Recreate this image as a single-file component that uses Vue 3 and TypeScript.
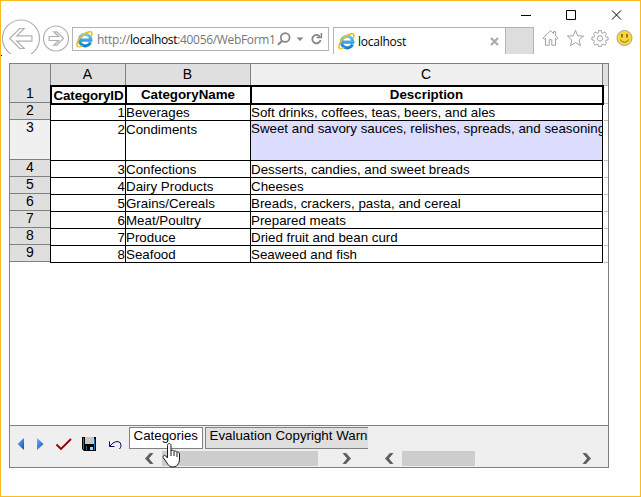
<script setup lang="ts">
interface Row {
  id: number
  name: string
  description: string
  tall?: boolean
}

const rows: Row[] = [
  { id: 1, name: 'Beverages', description: 'Soft drinks, coffees, teas, beers, and ales' },
  { id: 2, name: 'Condiments', description: 'Sweet and savory sauces, relishes, spreads, and seasonings', tall: true },
  { id: 3, name: 'Confections', description: 'Desserts, candies, and sweet breads' },
  { id: 4, name: 'Dairy Products', description: 'Cheeses' },
  { id: 5, name: 'Grains/Cereals', description: 'Breads, crackers, pasta, and cereal' },
  { id: 6, name: 'Meat/Poultry', description: 'Prepared meats' },
  { id: 7, name: 'Produce', description: 'Dried fruit and bean curd' },
  { id: 8, name: 'Seafood', description: 'Seaweed and fish' },
]
</script>

<template>
  <div class="window">
    <svg width="0" height="0" class="defs">
      <defs>
        <linearGradient id="ie" x1="0" y1="0" x2="0" y2="1">
          <stop offset="0" stop-color="#6cc8f2" />
          <stop offset="1" stop-color="#1680c8" />
        </linearGradient>
        <linearGradient id="nav" x1="0" y1="0" x2="1" y2="1">
          <stop offset="0" stop-color="#6fb4f4" />
          <stop offset="1" stop-color="#0c4cc0" />
        </linearGradient>
        <symbol id="ie-logo" viewBox="0 0 16 16">
          <path d="M13.6 10.6A5.4 5.4 0 1 1 14 8.6H4.2" fill="none" stroke="url(#ie)" stroke-width="2.9" />
          <path d="M2.2 14.8C-.8 13.8 1.6 7.6 6.6 3.6 10.6.4 14.8-.2 15 2.2c.1.9-.2 1.7-.6 2.5" fill="none" stroke="#f4bd20" stroke-width="1.5" />
          <path d="M2.2 14.8c1 .2 2.4-.3 3.8-1.2" fill="none" stroke="#f4bd20" stroke-width="1.2" />
        </symbol>
      </defs>
    </svg>

    <div class="captions">
      <svg width="100" height="12" viewBox="0 0 100 12" fill="none" stroke="#000">
        <path d="M0 5.5H10M45.5 .5h9v9h-9zM91 .5l9 9M100 .5l-9 9" />
      </svg>
    </div>

    <header class="toolbar">
      <svg class="nav-buttons" width="70" height="35" viewBox="0 0 70 35" fill="none" stroke="#b0b0b0" stroke-width="1.2">
        <circle cx="20" cy="19.5" r="18.5" />
        <path d="M8.7 19.500l10-10h4.500l-7.300 7.300h15v5.400h-15l7.300 7.300h-4.500z" />
        <circle cx="55" cy="19.500" r="12.500" />
        <path d="M62.500 19.500l-6.700-6.700h-3l4.800 4.700h-9.500v4h9.500l-4.800 4.700h3z" />
      </svg>
      <div class="address">
        <svg width="17" height="17"><use href="#ie-logo" /></svg>
        <span class="url">http://<b>localhost</b>:40056/WebForm1</span>
        <svg class="tools" width="46" height="16" viewBox="0 0 46 16" fill="none" stroke="#858585">
          <circle cx="8.200" cy="6.500" r="4.400" stroke-width="1.700" />
          <path d="M5.200 9.700L1 13.700" stroke-width="2.200" />
          <path d="M19.500 6.500h7L23 10z" fill="#858585" stroke="none" />
          <path d="M43 5.800A4.200 4.200 0 1 0 43.600 9" stroke-width="1.800" />
          <path d="M39.500 6.500h4.900V2" stroke-width="1.500" />
        </svg>
      </div>
      <div class="tab">
        <svg width="17" height="17"><use href="#ie-logo" /></svg>
        <span class="tab-title">localhost</span>
        <svg class="close" width="9" height="9" viewBox="0 0 9 9" stroke="#aaa" stroke-width="2.200"><path d="M1 1l7 7M8 1L1 8" /></svg>
      </div>
      <div class="new-tab"></div>
      <svg class="actions" width="92" height="18" viewBox="0 0 92 18" fill="none" stroke="#a0a0a0">
        <path d="M1 9.200L8.500 1.600l3 3V2.600h2v4L16 9.200l-1.200 1.200-1.300-1.200v7h-3.700v-5.500H7.200v5.500H3.500v-7l-1.300 1.200z" />
        <path d="M33.500 1.300l2.200 5.500 5.900.3-4.500 3.900 1.400 5.700-5-3.200-5 3.200 1.400-5.700-4.500-3.900 5.900-.3z" />
        <path d="M56.800 1.500h2.400l.5 2.200 1.300.5 1.900-1.200 1.700 1.700-1.200 1.900.5 1.300 2.200.5v2.400l-2.200.5-.5 1.300 1.200 1.900-1.700 1.700-1.900-1.200-1.300.5-.5 2.200h-2.400l-.5-2.200-1.300-.5-1.900 1.200-1.700-1.700 1.200-1.900-.5-1.300-2.200-.5V8.400l2.200-.5.5-1.300-1.200-1.900 1.700-1.700 1.900 1.200 1.300-.5z" />
        <circle cx="58" cy="9.500" r="2.700" />
        <circle cx="82.500" cy="9" r="7.500" fill="#fbd63e" stroke="#a9a48c" />
        <path d="M80 5v3.500M85 5v3.500" stroke="#665821" stroke-width="1.500" />
        <path d="M78 10.500q4.500 5.500 9 0" stroke="#81702b" />
      </svg>
    </header>

    <main class="sheet">
      <div class="columns">
        <div></div><div>A</div><div>B</div><div class="current">C</div><div></div>
      </div>
      <div class="body">
        <div class="row-heads">
          <div class="row-head first">1</div>
          <div v-for="row in rows" :key="row.id" class="row-head" :class="{ tall: row.tall }">{{ row.id + 1 }}</div>
        </div>
        <div class="cells">
          <div class="titles"><div class="title">CategoryID</div><div>CategoryName</div><div>Description</div></div>
          <div v-for="row in rows" :key="row.id" class="row" :class="{ tall: row.tall }">
            <div class="number">{{ row.id }}</div>
            <div>{{ row.name }}</div>
            <div class="description">{{ row.description }}</div>
          </div>
        </div>
        <div class="rest">
          <i class="first"></i>
          <i v-for="row in rows" :key="row.id" :class="{ tall: row.tall }"></i>
        </div>
      </div>
      <footer class="footer">
        <svg class="commands" width="119" height="41" viewBox="0 0 119 41">
          <path d="M14 12v12l-6.500-6z" fill="url(#nav)" />
          <path d="M27 12v12l6.500-6z" fill="url(#nav)" />
          <path d="M46.500 18.500l4.500 4.500 10-10" fill="none" stroke="#8b0000" stroke-width="1.800" />
          <path d="M72 11h14v14H74l-2-2z" fill="#000" />
          <path d="M75 11h9v7h-9z" fill="#c8c8c8" />
          <path d="M73 12h1v11h-1zM85 13h-1v11h1zM76 20h1v4h-1z" fill="#1576b4" />
          <path d="M80 21h3v3h-3z" fill="#c8c8c8" />
          <path d="M99.500 15.500v5h5M100 20l3-3q2-1.500 5-1.500 3 .5 3 4 0 2-1.500 3.500" fill="none" stroke="#000084" />
        </svg>
        <div class="sheets">
          <div class="sheet-tabs">
            <div class="sheet-tab active">Categories</div>
            <div class="sheet-tab">Evaluation Copyright Warning</div>
          </div>
          <div class="scrollbar">
            <svg width="9" height="11" viewBox="0 0 9 11"><path d="M8.500 0H5L0 5.500 5 11h3.500L4 5.500z" fill="#606060" /></svg>
            <div class="thumb wide"></div>
            <svg width="9" height="11" viewBox="0 0 9 11"><path d="M.5 0H4l5 5.500L4 11H.5L5 5.500z" fill="#606060" /></svg>
          </div>
        </div>
        <div class="scrollbar second">
          <svg width="9" height="11" viewBox="0 0 9 11"><path d="M8.500 0H5L0 5.500 5 11h3.500L4 5.500z" fill="#606060" /></svg>
          <div class="thumb"></div>
          <svg width="9" height="11" viewBox="0 0 9 11"><path d="M.5 0H4l5 5.500L4 11H.5L5 5.500z" fill="#606060" /></svg>
        </div>
      </footer>
    </main>
    <svg class="pointer" width="19" height="25" viewBox="0 0 19 25">
      <path d="M5.500 15V2.500c0-2.600 3.500-2.600 3.500 0V8c.4-1.200 3-1 3 .6.500-1 2.800-.7 2.800.9.700-.8 2.700-.4 2.700 1.300V16c0 3-1 4-1.500 5-1 3.500-8 4-10 .5L1.500 15c-1.300-2 .7-3.500 2.300-2z" fill="#fff" stroke="#1c1c24" />
      <path d="M9 8v5M12 9v4M15 10v4" stroke="#1c1c24" fill="none" />
    </svg>
  </div>
</template>

<style>
body {
  margin: 0;
  background: #fff;
}
</style>

<style scoped>
.window {
  box-sizing: border-box;
  width: 641px;
  height: 497px;
  border: 1px solid #fbba1d;
  position: relative;
  overflow: hidden;
  font-family: "Liberation Sans", Arial, sans-serif;
  color: #000;
}
.window::before {
  content: "";
  position: absolute;
  left: -1px;
  top: 54px;
  width: 2px;
  height: 1px;
  background: #000;
}
.defs {
  position: absolute;
}
svg {
  flex: none;
  display: block;
}
.captions {
  height: 18px;
  padding: 9px 0 0 520px;
  box-sizing: border-box;
}
.captions svg {
  overflow: visible;
}
.toolbar {
  display: flex;
  height: 35px;
  overflow: hidden;
  font-family: "Open Sans", "Noto Sans", sans-serif;
}
.nav-buttons {
  margin-right: 1px;
}
.address {
  box-sizing: border-box;
  width: 257px;
  height: 24px;
  margin-top: 8px;
  border: 1px solid #b4b4b4;
  display: flex;
  align-items: center;
  padding-left: 3px;
}
.url {
  width: 177px;
  margin-left: 4px;
  overflow: hidden;
  white-space: nowrap;
  font-size: 12px;
  line-height: 20px;
  letter-spacing: -0.33px;
  color: #777;
  position: relative;
  top: 1px;
}
.url b {
  font-weight: 400;
  color: #000;
}
.tools {
  margin-left: 3px;
}
.tab {
  box-sizing: border-box;
  width: 172px;
  height: 27px;
  margin: 8px 0 0 4px;
  border: 1px solid #b4b4b4;
  border-width: 1px 0 0 1px;
  display: flex;
  align-items: center;
  padding: 0 0 0 4px;
  font-size: 12px;
  letter-spacing: -0.25px;
}
.tab-title {
  width: 127px;
  margin-left: 3px;
  padding-top: 1px;
}
.close {
  margin-left: 5px;
}
.new-tab {
  box-sizing: border-box;
  width: 29px;
  height: 27px;
  margin-top: 8px;
  border: 1px solid #b4b4b4;
  border-bottom: 0;
  background: #ddd;
}
.actions {
  margin: 10px 0 0 8px;
}
.sheet {
  box-sizing: border-box;
  width: 600px;
  height: 405px;
  margin: 9px 0 0 8px;
  border: 1px solid #808080;
  display: flex;
  flex-direction: column;
  font-size: 13.33px;
  line-height: 16px;
  white-space: nowrap;
}
.columns {
  height: 21px;
  display: grid;
  grid-template-columns: 41px 75px 125px 352px 5px;
  border-bottom: 1px solid #808080;
  box-sizing: border-box;
}
.columns > div {
  box-sizing: border-box;
  border-right: 1px solid #808080;
  background: #dfdfdf;
  text-align: center;
  line-height: 21px;
  padding-right: 1px;
  font-size: 14px;
}
.columns > div:last-child {
  border: 0;
}
.columns > .current {
  background: #f0f0f0;
}
.body {
  display: flex;
  height: 340px;
}
.row-heads {
  width: 40px;
}
.row-head {
  box-sizing: border-box;
  height: 17px;
  border-bottom: 1px solid #808080;
  background: #dfdfdf;
  text-align: center;
  line-height: 15px;
  font-size: 14px;
}
.row-head.first {
  height: 18px;
  line-height: 16px;
}
.row-head.tall {
  height: 40px;
  background: #f0f0f0;
}
.cells {
  width: 554px;
}
.titles,
.row {
  display: grid;
  grid-template-columns: 76px 125px 352px;
  box-sizing: border-box;
}
.titles {
  grid-template-columns: 75px 125px 352px;
  height: 20px;
  border: 2px solid #000;
  border-right: 0;
  font-weight: 700;
  text-align: center;
}
.titles > div {
  border-right: 2px solid #000;
  box-sizing: border-box;
  padding-right: 1px;
}
.titles > .title {
  line-height: 18px;
  letter-spacing: -0.12px;
  padding: 0;
}
.row {
  height: 17px;
}
.row.tall {
  height: 40px;
}
.row:nth-child(2) {
  height: 16px;
}
.row > div {
  box-sizing: border-box;
  border-right: 1px solid #000;
  border-bottom: 1px solid #000;
  padding-top: 1px;
  overflow: hidden;
}
.row:nth-child(2) > div,
.row.tall > .description {
  padding-top: 0;
}
.row > .number {
  border-left: 1px solid #000;
  text-align: right;
}
.tall > .description {
  background: #ddf;
}
.rest {
  width: 4px;
}
.rest i {
  display: block;
  box-sizing: border-box;
  height: 17px;
  border-bottom: 1px solid #c0c0c0;
}
.rest .first {
  height: 19px;
  border-top: 1px solid #c0c0c0;
}
.rest .tall {
  height: 40px;
}
.footer {
  height: 42px;
  box-sizing: border-box;
  border-top: 1px solid #808080;
  background: #efefef;
  display: flex;
}
.sheets {
  width: 239px;
}
.sheet-tabs {
  display: flex;
  gap: 2px;
  padding-top: 1px;
  height: 24px;
  overflow: hidden;
}
.sheet-tab {
  box-sizing: border-box;
  height: 22px;
  flex: none;
  border: 1px solid #808080;
  background: #dfdfdf;
  padding: 0 4px 0 3.5px;
  line-height: 15px;
}
.sheet-tab.active {
  width: 74px;
  background: #fff;
}
.scrollbar {
  display: flex;
  align-items: center;
  height: 15px;
  padding-left: 16px;
}
.scrollbar.second {
  padding: 25px 0 0 17px;
}
.thumb {
  width: 73px;
  height: 15px;
  margin: 0 107px 0 8px;
  background: #cdcdcd;
}
.thumb.wide {
  width: 156px;
  margin-right: 24px;
}
.pointer {
  position: absolute;
  left: 161px;
  top: 442px;
}
</style>
